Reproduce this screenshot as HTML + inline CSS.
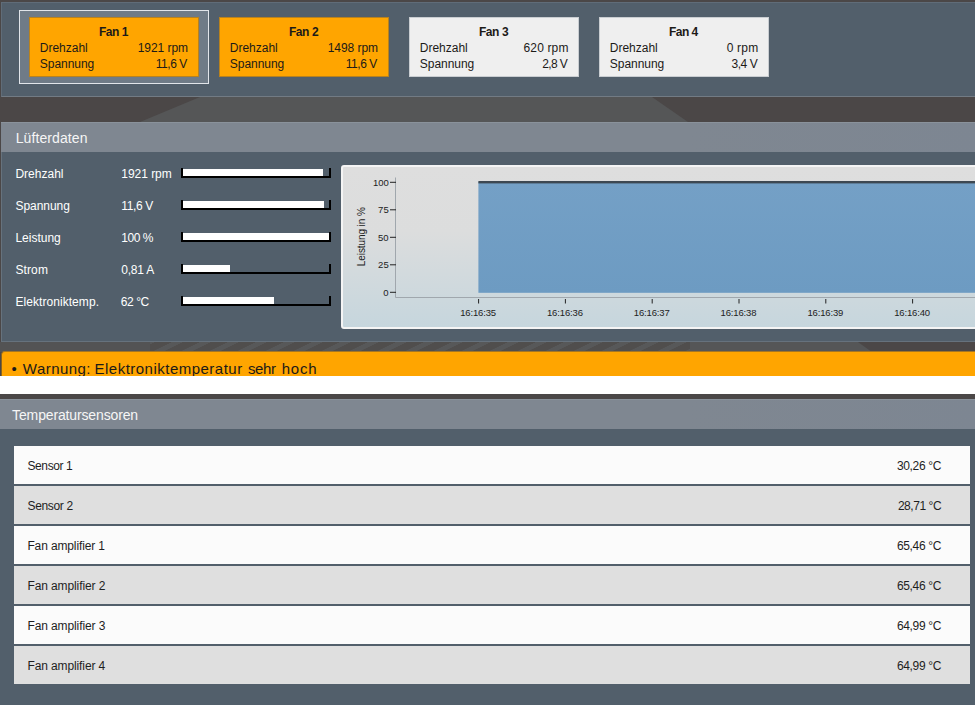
<!DOCTYPE html><html lang="de"><head><meta charset="utf-8"><title>Lüfterdaten</title><style>
html,body{margin:0;padding:0}
body{width:975px;height:705px;overflow:hidden;position:relative;background:#4b4747;font-family:"Liberation Sans",sans-serif}
.a{position:absolute;box-sizing:border-box}
.t{position:absolute;white-space:pre;line-height:20px;height:20px}
.panel{background:#525f6b}
.hdr{background:linear-gradient(90deg,#7f8791 0%,#7f8791 70%,#7d8692 100%);border-top:1px solid #8a929b}
.fan{width:170px;height:60px;top:17px;border:1px solid}
.fo{background:#ffa500;border-color:#b9821d}
.fg{background:#efefef;border-color:#c9cdd1}
.bar{left:181px;width:150px;height:10px;border:2px solid #000;border-top:0}
.bar i{position:absolute;left:0;top:1px;height:7px;background:#fff;display:block}
.row{left:14px;width:956px;height:38px}
.r1{background:#fbfbfb}.r2{background:#dfdfdf}
</style></head><body>
<svg class="a" style="left:0;top:0" width="975" height="705" viewBox="0 0 975 705"><polygon points="200,97 652,97 688,122 140,122" fill="#555657"/><defs><pattern id="st" width="28" height="20" patternUnits="userSpaceOnUse" patternTransform="translate(4 342) skewX(-64)"><rect width="28" height="20" fill="#504e4d"/><rect width="11" height="20" fill="#575859"/></pattern></defs><rect x="0" y="342" width="975" height="10" fill="#535354"/><rect x="150" y="342" width="545" height="10" fill="url(#st)"/><polygon points="690,342 858,342 872,352 690,352" fill="#555657"/><polygon points="858,342 975,342 975,352 872,352" fill="#4b4747"/></svg>
<div class="a panel" style="left:1px;top:2px;width:980px;height:95px;border:1px solid #606c78;border-bottom-color:#727b84"></div>
<div class="a" style="left:19px;top:10px;width:190px;height:74px;background:#6f7b87;border:1px solid #e1e5ea"></div>
<div class="a fan fo" style="left:29px"></div>
<div class="a fan fo" style="left:219px"></div>
<div class="a fan fg" style="left:409px"></div>
<div class="a fan fg" style="left:599px"></div>
<div class="a panel" style="left:1px;top:122px;width:980px;height:220px;border:1px solid #66727d;border-top:0"></div>
<div class="a hdr" style="left:1px;top:122px;width:980px;height:30px"></div>
<div class="a bar" style="top:168px"><i style="width:140px"></i></div>
<div class="a bar" style="top:200px"><i style="width:141px"></i></div>
<div class="a bar" style="top:232px"><i style="width:146px"></i></div>
<div class="a bar" style="top:264px"><i style="width:47px"></i></div>
<div class="a bar" style="top:296px"><i style="width:90.5px"></i></div>
<div class="a" style="left:341px;top:165px;width:700px;height:164px;border:2px solid #f4f4f4;border-radius:3px;background:linear-gradient(#dedede 0%,#dcdddd 40%,#c6d6dd 100%)"></div>
<svg class="a" style="left:0;top:0" width="975" height="705" viewBox="0 0 975 705"><defs><linearGradient id="bl" x1="0" y1="0" x2="0" y2="1"><stop offset="0" stop-color="#74a0c6"/><stop offset="1" stop-color="#6d9bc2"/></linearGradient></defs><rect x="478.4" y="182" width="520" height="110.8" fill="url(#bl)"/><rect x="478.4" y="181" width="520" height="2.4" fill="#3d4852"/><path d="M395.5 177.5V297.5H990" fill="none" stroke="#a0a7ad" stroke-width="1"/><path d="M390 182.3H396" stroke="#222" stroke-width="1"/><path d="M390 209.8H396" stroke="#222" stroke-width="1"/><path d="M390 237.3H396" stroke="#222" stroke-width="1"/><path d="M390 264.8H396" stroke="#222" stroke-width="1"/><path d="M390 292.3H396" stroke="#222" stroke-width="1"/><path d="M478.6 299V303.5" stroke="#222" stroke-width="1"/><path d="M565.4 299V303.5" stroke="#222" stroke-width="1"/><path d="M652.2 299V303.5" stroke="#222" stroke-width="1"/><path d="M739.0 299V303.5" stroke="#222" stroke-width="1"/><path d="M825.8 299V303.5" stroke="#222" stroke-width="1"/><path d="M912.6 299V303.5" stroke="#222" stroke-width="1"/><text transform="translate(364.5 236.7) rotate(-90)" text-anchor="middle" font-size="10" fill="#222" font-family="Liberation Sans, sans-serif" textLength="59" lengthAdjust="spacing">Leistung in %</text></svg>
<div class="a" style="left:1px;top:351px;width:980px;height:30px;background:#ffa500;border-top:1px solid #a57623;border-left:1px solid #8a6420;border-radius:4px 0 0 0"></div>
<div class="a" style="left:0;top:376px;width:975px;height:18px;background:#fff;z-index:5"></div>
<div class="a panel" style="left:0;top:399px;width:980px;height:320px"></div>
<div class="a hdr" style="left:0;top:399px;width:980px;height:30px"></div>
<div class="a row r1" style="top:446px"></div>
<div class="a row r2" style="top:486px"></div>
<div class="a row r1" style="top:526px"></div>
<div class="a row r2" style="top:566px"></div>
<div class="a row r1" style="top:606px"></div>
<div class="a row r2" style="top:646px"></div>
<div class="t" style="left:98.89px;top:22.00px;font-size:12px;color:#1c1a18;letter-spacing:-0.445px;font-weight:700;">Fan 1</div>
<div class="t" style="left:39.71px;top:38.00px;font-size:12px;color:#1c1a18;letter-spacing:0.006px;">Drehzahl</div>
<div class="t" style="left:39.80px;top:54.00px;font-size:12px;color:#1c1a18;letter-spacing:-0.045px;">Spannung</div>
<div class="t" style="left:137.65px;top:38.00px;font-size:12px;color:#1c1a18;letter-spacing:-0.043px;">1921 rpm</div>
<div class="t" style="left:155.68px;top:54.00px;font-size:12px;color:#1c1a18;letter-spacing:-0.434px;">11,6 V</div>
<div class="t" style="left:288.95px;top:22.00px;font-size:12px;color:#1c1a18;letter-spacing:-0.418px;font-weight:700;">Fan 2</div>
<div class="t" style="left:229.71px;top:38.00px;font-size:12px;color:#1c1a18;letter-spacing:0.006px;">Drehzahl</div>
<div class="t" style="left:229.80px;top:54.00px;font-size:12px;color:#1c1a18;letter-spacing:-0.045px;">Spannung</div>
<div class="t" style="left:327.65px;top:38.00px;font-size:12px;color:#1c1a18;letter-spacing:-0.043px;">1498 rpm</div>
<div class="t" style="left:345.68px;top:54.00px;font-size:12px;color:#1c1a18;letter-spacing:-0.434px;">11,6 V</div>
<div class="t" style="left:478.95px;top:22.00px;font-size:12px;color:#1c1a18;letter-spacing:-0.418px;font-weight:700;">Fan 3</div>
<div class="t" style="left:419.71px;top:38.00px;font-size:12px;color:#1c1a18;letter-spacing:0.006px;">Drehzahl</div>
<div class="t" style="left:419.80px;top:54.00px;font-size:12px;color:#1c1a18;letter-spacing:-0.045px;">Spannung</div>
<div class="t" style="left:523.55px;top:38.00px;font-size:12px;color:#1c1a18;letter-spacing:0.14px;">620 rpm</div>
<div class="t" style="left:542.32px;top:54.00px;font-size:12px;color:#1c1a18;letter-spacing:-0.62px;">2,8 V</div>
<div class="t" style="left:668.89px;top:22.00px;font-size:12px;color:#1c1a18;letter-spacing:-0.496px;font-weight:700;">Fan 4</div>
<div class="t" style="left:609.71px;top:38.00px;font-size:12px;color:#1c1a18;letter-spacing:0.006px;">Drehzahl</div>
<div class="t" style="left:609.80px;top:54.00px;font-size:12px;color:#1c1a18;letter-spacing:-0.045px;">Spannung</div>
<div class="t" style="left:726.65px;top:38.00px;font-size:12px;color:#1c1a18;letter-spacing:0.212px;">0 rpm</div>
<div class="t" style="left:731.51px;top:54.00px;font-size:12px;color:#1c1a18;letter-spacing:-0.447px;">3,4 V</div>
<div class="t" style="left:15.66px;top:128.00px;font-size:14px;color:#f6f6f6;letter-spacing:0.102px;">Lüfterdaten</div>
<div class="t" style="left:15.41px;top:164.00px;font-size:12px;color:#ffffff;letter-spacing:0.006px;">Drehzahl</div>
<div class="t" style="left:121.25px;top:164.00px;font-size:12px;color:#ffffff;letter-spacing:-0.028px;">1921 rpm</div>
<div class="t" style="left:15.50px;top:196.00px;font-size:12px;color:#ffffff;letter-spacing:-0.059px;">Spannung</div>
<div class="t" style="left:121.25px;top:196.00px;font-size:12px;color:#ffffff;letter-spacing:-0.354px;">11,6 V</div>
<div class="t" style="left:15.41px;top:228.00px;font-size:12px;color:#ffffff;letter-spacing:-0.006px;">Leistung</div>
<div class="t" style="left:121.15px;top:228.00px;font-size:12px;color:#ffffff;letter-spacing:-0.414px;">100 %</div>
<div class="t" style="left:15.50px;top:260.00px;font-size:12px;color:#ffffff;letter-spacing:0.095px;">Strom</div>
<div class="t" style="left:121.20px;top:260.00px;font-size:12px;color:#ffffff;letter-spacing:-0.176px;">0,81 A</div>
<div class="t" style="left:15.41px;top:292.00px;font-size:12px;color:#ffffff;letter-spacing:0.063px;">Elektroniktemp.</div>
<div class="t" style="left:120.74px;top:292.00px;font-size:12px;color:#ffffff;letter-spacing:-0.411px;">62 °C</div>
<div class="t" style="left:12.12px;top:405.00px;font-size:14px;color:#f6f6f6;letter-spacing:-0.143px;">Temperatursensoren</div>
<div class="t" style="left:27.50px;top:456.00px;font-size:12px;color:#1e1e1e;letter-spacing:-0.406px;">Sensor 1</div>
<div class="t" style="left:896.95px;top:456.00px;font-size:12px;color:#1e1e1e;letter-spacing:-0.345px;">30,26 °C</div>
<div class="t" style="left:27.50px;top:496.00px;font-size:12px;color:#1e1e1e;letter-spacing:-0.332px;">Sensor 2</div>
<div class="t" style="left:897.90px;top:496.00px;font-size:12px;color:#1e1e1e;letter-spacing:-0.444px;">28,71 °C</div>
<div class="t" style="left:27.41px;top:536.00px;font-size:12px;color:#1e1e1e;letter-spacing:-0.13px;">Fan amplifier 1</div>
<div class="t" style="left:896.95px;top:536.00px;font-size:12px;color:#1e1e1e;letter-spacing:-0.349px;">65,46 °C</div>
<div class="t" style="left:27.41px;top:576.00px;font-size:12px;color:#1e1e1e;letter-spacing:-0.101px;">Fan amplifier 2</div>
<div class="t" style="left:896.95px;top:576.00px;font-size:12px;color:#1e1e1e;letter-spacing:-0.349px;">65,46 °C</div>
<div class="t" style="left:27.41px;top:616.00px;font-size:12px;color:#1e1e1e;letter-spacing:-0.101px;">Fan amplifier 3</div>
<div class="t" style="left:896.95px;top:616.00px;font-size:12px;color:#1e1e1e;letter-spacing:-0.349px;">64,99 °C</div>
<div class="t" style="left:27.41px;top:656.00px;font-size:12px;color:#1e1e1e;letter-spacing:-0.109px;">Fan amplifier 4</div>
<div class="t" style="left:896.95px;top:656.00px;font-size:12px;color:#1e1e1e;letter-spacing:-0.349px;">64,99 °C</div>
<div class="t" style="left:11.39px;top:359.00px;font-size:15px;color:#1c1a18;">•</div>
<div class="t" style="left:22.84px;top:359.00px;font-size:15px;color:#1c1a18;letter-spacing:0.453px;">Warnung:</div>
<div class="t" style="left:94.54px;top:359.00px;font-size:15px;color:#1c1a18;letter-spacing:0.485px;">Elektroniktemperatur</div>
<div class="t" style="left:248.00px;top:359.00px;font-size:15px;color:#1c1a18;letter-spacing:-0.387px;">sehr</div>
<div class="t" style="left:281.79px;top:359.00px;font-size:15px;color:#1c1a18;letter-spacing:0.727px;">hoch</div>
<div class="t" style="left:372.90px;top:172.70px;font-size:9.5px;color:#222;">100</div>
<div class="t" style="left:378.11px;top:200.20px;font-size:9.5px;color:#222;">75</div>
<div class="t" style="left:378.05px;top:227.70px;font-size:9.5px;color:#222;">50</div>
<div class="t" style="left:378.11px;top:255.20px;font-size:9.5px;color:#222;">25</div>
<div class="t" style="left:383.20px;top:282.70px;font-size:9.5px;color:#222;">0</div>
<div class="t" style="left:460.19px;top:302.60px;font-size:9.5px;color:#222;letter-spacing:-0.146px;">16:16:35</div>
<div class="t" style="left:546.99px;top:302.60px;font-size:9.5px;color:#222;letter-spacing:-0.146px;">16:16:36</div>
<div class="t" style="left:633.79px;top:302.60px;font-size:9.5px;color:#222;letter-spacing:-0.146px;">16:16:37</div>
<div class="t" style="left:720.59px;top:302.60px;font-size:9.5px;color:#222;letter-spacing:-0.146px;">16:16:38</div>
<div class="t" style="left:807.39px;top:302.60px;font-size:9.5px;color:#222;letter-spacing:-0.146px;">16:16:39</div>
<div class="t" style="left:894.19px;top:302.60px;font-size:9.5px;color:#222;letter-spacing:-0.147px;">16:16:40</div>
</body></html>
